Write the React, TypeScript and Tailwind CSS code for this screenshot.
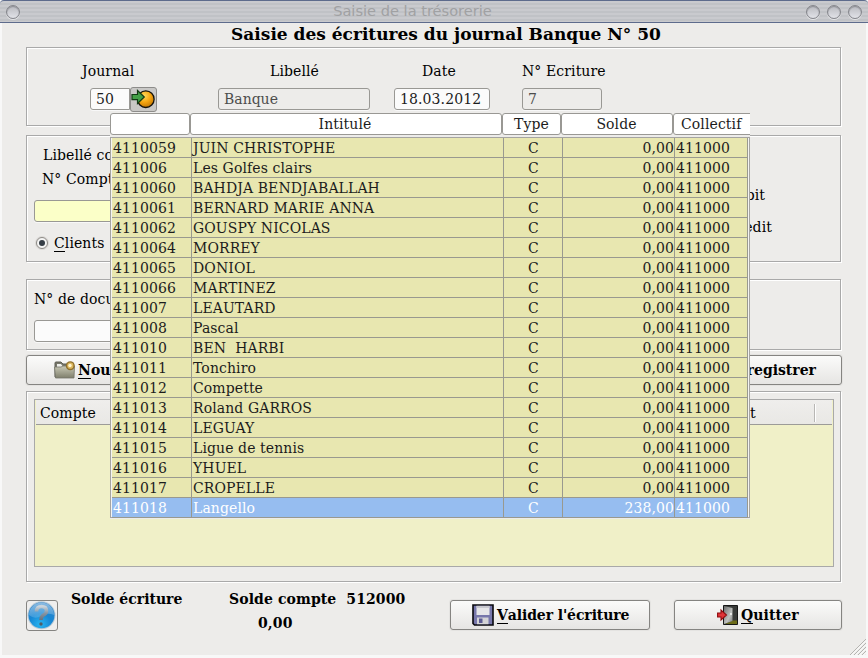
import React from "react";

const rows: [string, string, string][] = [
  ["4110059", "JUIN CHRISTOPHE", "0,00"],
  ["411006", "Les Golfes clairs", "0,00"],
  ["4110060", "BAHDJA BENDJABALLAH", "0,00"],
  ["4110061", "BERNARD MARIE ANNA", "0,00"],
  ["4110062", "GOUSPY NICOLAS", "0,00"],
  ["4110064", "MORREY", "0,00"],
  ["4110065", "DONIOL", "0,00"],
  ["4110066", "MARTINEZ", "0,00"],
  ["411007", "LEAUTARD", "0,00"],
  ["411008", "Pascal", "0,00"],
  ["411010", "BEN  HARBI", "0,00"],
  ["411011", "Tonchiro", "0,00"],
  ["411012", "Compette", "0,00"],
  ["411013", "Roland GARROS", "0,00"],
  ["411014", "LEGUAY", "0,00"],
  ["411015", "Ligue de tennis", "0,00"],
  ["411016", "YHUEL", "0,00"],
  ["411017", "CROPELLE", "0,00"],
  ["411018", "Langello", "238,00"],
];

const group =
  "border border-[#a9a9a9] shadow-[1px_1px_0_#fff,inset_1px_1px_0_#fff]";
const field =
  "h-[22px] border border-[#999894] rounded-[3px] px-[5px] leading-5 shadow-[0_1px_0_#f8f8f8]";
const button =
  "flex items-center h-[30px] border border-[#858481] rounded-[3px] bg-linear-to-b from-[#fbfbfa] to-[#e6e5e3] font-bold text-black shadow-[0_0_0_1px_#e4e3e1]";
const headCell = "shrink-0 border border-[#999894] rounded-[3px] bg-white";

function Knob() {
  return (
    <span className="block size-[14px] rounded-full border border-[#85868c] bg-linear-to-b from-[#b9bac0] to-[#e2e3e8] shadow-[0_1px_0_#e4e5e8,inset_0_1px_1px_#8d8e94]" />
  );
}

function Key({ children }: { children: React.ReactNode }) {
  return <span className="border-b border-black inline-block h-[17px] leading-[17px]">{children}</span>;
}

function GoIcon() {
  return (
    <svg width="25" height="22" viewBox="0 0 25 22">
      <defs>
        <radialGradient id="ball" cx="0.4" cy="0.3" r="0.7">
          <stop offset="0" stopColor="#ffd95e" />
          <stop offset="0.55" stopColor="#f5a50f" />
          <stop offset="1" stopColor="#c67a05" />
        </radialGradient>
      </defs>
      <circle cx="14.8" cy="11.2" r="8.3" fill="url(#ball)" stroke="#15120a" strokeWidth="1.3" />
      <path d="M1 6.500H6.500V2.500L13.300 9L6.500 15.500V11.700H1Z" fill="#43a047" stroke="#123b14" strokeWidth="1.200" />
    </svg>
  );
}

function FolderIcon() {
  return (
    <svg width="22" height="18" viewBox="0 0 22 18">
      <defs>
        <linearGradient id="fold" x1="0" y1="0" x2="0" y2="1">
          <stop offset="0" stopColor="#c9c9b6" />
          <stop offset="1" stopColor="#7f7f6c" />
        </linearGradient>
      </defs>
      <path d="M1 16V2Q1 1 2 1H7L9 3H18V16Z" fill="#77776a" stroke="#5f5f55" />
      <path d="M3 3H7L8.500 5H16V8H3Z" fill="#f1f1ec" />
      <path d="M0.500 6H7L9 5H20.500L20 17H1.500Z" fill="url(#fold)" stroke="#74746a" strokeWidth="0.800" />
      <circle cx="16.300" cy="4.700" r="4.500" fill="#8f6f2c" />
      <circle cx="16.300" cy="4.700" r="3.100" fill="#dcb75c" />
      <circle cx="16" cy="4.500" r="1.700" fill="#fff4cf" />
    </svg>
  );
}

function DiskIcon() {
  return (
    <svg width="22" height="22" viewBox="0 0 22 22">
      <path d="M1 1H21V21H2.500L1 19.500Z" fill="#7777ab" stroke="#08080c" strokeWidth="1.600" />
      <path d="M4.500 1.800H17.500V11H4.500Z" fill="#e6e6e8" />
      <path d="M4.500 2H17.500V4H4.500Z" fill="#c9c9cf" />
      <path d="M5 13.500H16.500V20.200H5Z" fill="#d4d4d6" />
      <path d="M7 14.500H10.500V19H7Z" fill="#5c5c94" />
    </svg>
  );
}

function DoorIcon() {
  return (
    <svg width="22" height="20" viewBox="0 0 22 20">
      <defs>
        <linearGradient id="door" x1="0" y1="0" x2="1" y2="1">
          <stop offset="0" stopColor="#6b6b6b" />
          <stop offset="0.600" stopColor="#c0c2c0" />
          <stop offset="1" stopColor="#7a7a7a" />
        </linearGradient>
      </defs>
      <path d="M6.500 0.500H20.500V19.500H6.500Z" fill="#393b39" stroke="#171717" />
      <path d="M8 19L16 15.500H20V19Z" fill="#6c6b18" />
      <path d="M7 1L15.500 3V16L7 19Z" fill="url(#door)" />
      <circle cx="14" cy="9" r="0.900" fill="#fff" />
      <path d="M0.600 8H4V5L9.500 10L4 15V12H0.600Z" fill="#e03438" stroke="#8e0d10" strokeWidth="1.100" />
    </svg>
  );
}

function HelpIcon() {
  return (
    <svg width="30" height="29" viewBox="0 0 30 29">
      <defs>
        <radialGradient id="help" cx="0.450" cy="0.850" r="0.850">
          <stop offset="0" stopColor="#29b5f0" />
          <stop offset="0.500" stopColor="#1787d4" />
          <stop offset="1" stopColor="#2f83c8" />
        </radialGradient>
        <linearGradient id="shine" x1="0" y1="0" x2="0" y2="1">
          <stop offset="0" stopColor="#fff" stopOpacity="0.450" />
          <stop offset="1" stopColor="#fff" stopOpacity="0.150" />
        </linearGradient>
        <linearGradient id="mark" x1="0" y1="0" x2="0" y2="1">
          <stop offset="0" stopColor="#c9d3db" />
          <stop offset="0.500" stopColor="#8595a4" />
          <stop offset="1" stopColor="#66727e" />
        </linearGradient>
      </defs>
      <circle cx="14.500" cy="14.300" r="14" fill="#b9cad6" />
      <circle cx="14.500" cy="14.300" r="13" fill="url(#help)" />
      <path d="M2 14A12.500 12.500 0 0 1 27 14Q20 11 14 15T2 14Z" fill="url(#shine)" />
      <path d="M9.500 10.500Q9.500 5.500 14.500 5.500T19.500 10Q19.500 12.500 16.500 14Q14 15.500 14 19" fill="none" stroke="url(#mark)" strokeWidth="3.600" />
      <circle cx="14" cy="23" r="1.700" fill="#4f5c68" />
    </svg>
  );
}

export default function App() {
  return (
    <div className="relative w-[868px] h-[658px] overflow-hidden bg-[#f8f8f8] flex flex-col whitespace-pre text-[14px] leading-5 text-black tracking-[0.1px] font-['DejaVu_Serif',serif]">
      <header className="h-[23px] shrink-0 flex items-center border-t border-b border-[#5d6b8c] rounded-t-[4px] px-[6px] bg-[repeating-linear-gradient(to_bottom,#c9cace_0px,#c9cace_2px,#c0c2c6_2px,#c0c2c6_4px)]">
        <Knob />
        <div className="flex-1 pr-px -mt-px text-center text-[#a0a1a3] text-[14.6px] tracking-normal font-['DejaVu_Sans',sans-serif]">
          Saisie de la trésorerie
        </div>
        <div className="flex gap-[7px]">
          <Knob />
          <Knob />
          <Knob />
        </div>
      </header>

      <main className="mx-[2px] h-[632px] shrink-0 bg-[#edecea] pl-6 pr-[25px] flex flex-col">
        <h1 className="h-6 leading-[22px] text-center font-bold text-[17px] tracking-normal pl-[25px]">Saisie des écritures du journal Banque N° 50</h1>

        <section className={`${group} w-[815px] h-[79px] flex pt-[13px]`}>
          <div className="ml-[55px] w-[75px]">
            <div>Journal</div>
            <div className="flex items-center ml-2 mt-[5px] h-[26px]">
              <div className={`${field} w-10 bg-[#fbfbfb] rounded-r-none text-[#1c1c1c]`}>50</div>
              <div className="w-[27px] h-[25px] flex items-center justify-center border border-[#8d8c8a] rounded-[3px] bg-[#c9c8c6]">
                <GoIcon />
              </div>
            </div>
          </div>
          <div className="ml-[61px] w-[152px]">
            <div className="pl-[52px]">Libellé</div>
            <div className={`${field} mt-[7px] text-[#4c4c4c] tracking-normal`}>Banque</div>
          </div>
          <div className="ml-6 w-[96px]">
            <div className="pl-7">Date</div>
            <div className={`${field} mt-[7px] bg-[#fbfbfb] text-[#1c1c1c]`}>18.03.2012</div>
          </div>
          <div className="ml-8 w-[90px]">
            <div>N° Ecriture</div>
            <div className={`${field} mt-[7px] w-20 text-[#4c4c4c]`}>7</div>
          </div>
        </section>

        <section className={`${group} w-[815px] h-[127px] mt-[9px] flex justify-between`}>
          <div className="w-[85px] overflow-hidden pl-[7px] pt-[9px]">
            <div className="pl-[9px]">Libellé co</div>
            <div className="pl-2 mt-1">N° Compt</div>
            <div className={`${field} mt-[11px] w-[150px] bg-[#fbffc8]`} />
            <div className="flex items-center gap-[6px] mt-[11px] pl-[2px] h-5">
              <span className="size-3 shrink-0 rounded-full border border-[#8d8a86] bg-[#f5f5f4] flex items-center justify-center shadow-[0_0_0_1px_#dcdad7]">
                <span className="size-[6px] rounded-full bg-[#363e46]" />
              </span>
              <span>
                <Key>C</Key>lients
              </span>
            </div>
          </div>
          <div className="w-[92px] pt-[49px] flex flex-col gap-3">
            <div className="flex justify-end w-[17px]">bit</div>
            <div className="flex justify-end w-[24px]">edit</div>
          </div>
        </section>

        <section className={`${group} w-[815px] h-[71px] mt-[17px] pl-[7px] pt-[9px]`}>
          <div>N° de docu</div>
          <div className={`${field} mt-[11px] w-[150px] bg-[#fbfbfb]`} />
        </section>

        <div className="flex justify-between w-[816px] mt-[5px]">
          <button className={`${button} w-[190px] pl-[27px] gap-[2px]`}>
            <FolderIcon />
            <span>
              <Key>N</Key>ou
            </span>
          </button>
          <button className={`${button} w-[190px] justify-end pr-[25px] tracking-normal`}>registrer</button>
        </div>

        <section className={`${group} w-[815px] h-[191px] mt-[6px] p-[7px]`}>
          <div className="w-[800px] h-[168px] border border-[#a9a9a9] bg-[#f0f0c8] flex flex-col">
            <div className="h-[25px] border-b border-[#9c9b98] bg-linear-to-b from-[#efeeec] to-[#e9e8e5] flex justify-between pl-[4px] pr-[16px] leading-[27px] mx-px">
              <span>Compte</span>
              <div className="flex pt-1">
                <span className="-mt-1 w-[64px]">t</span>
                <span className="w-[2px] h-[18px] bg-white border-l border-[#b8b7b4]" />
              </div>
            </div>
          </div>
        </section>

        <footer className="flex w-[816px] h-[52px] mt-[6px] pt-px font-bold">
          <button className="mt-[11px] w-8 h-[31px] border border-[#858481] rounded-[3px] bg-[#efeeed] flex items-center justify-center">
            <HelpIcon />
          </button>
          <div className="ml-[13px] w-[158px] tracking-normal">Solde écriture</div>
          <div className="w-[221px]">
            <div>Solde compte  512000</div>
            <div className="mt-1 pl-[29px]">0,00</div>
          </div>
          <button className={`${button} mt-[11px] w-[200px] pl-[21px] gap-[3px] tracking-[-0.1px]`}>
            <DiskIcon />
            <span>
              <Key>V</Key>alider l'écriture
            </span>
          </button>
          <button className={`${button} mt-[11px] ml-6 w-[168px] pl-[42px] gap-[2px]`}>
            <DoorIcon />
            <span>
              <Key>Q</Key>uitter
            </span>
          </button>
        </footer>
      </main>

      <svg className="absolute right-[2px] bottom-[3px]" width="16" height="16" viewBox="0 0 16 16">
        <path d="M0 16L16 0M4 16L16 4M8 16L16 8M12 16L16 12" stroke="#b5b4b1" />
        <path d="M1.500 16L16 1.500M5.500 16L16 5.500M9.500 16L16 9.500M13.500 16L16 13.500" stroke="#fff" />
      </svg>

      <div className="absolute left-[110px] top-[113px] w-[640px] h-[406px] bg-[#edecea] text-[#1c1c1c]">
        <div className="flex h-[22px] w-[640px] overflow-hidden text-center leading-5">
          <div className={`${headCell} w-20`} />
          <div className={`${headCell} w-[312px] pr-[2px]`}>Intitulé</div>
          <div className={`${headCell} w-[59px]`}>Type</div>
          <div className={`${headCell} w-[112px] pr-px`}>Solde</div>
          <div className={`${headCell} w-[80px] text-left pl-[7px]`}>Collectif</div>
        </div>
        <div className="mt-[2px] w-[640px] h-[381px] border border-[#a5a4a1] bg-[#f4f4f2] pl-px pr-[1px]">
          {rows.map(([code, name, amount], i) => {
            const selected = i === rows.length - 1;
            return (
              <div
                key={code}
                className={`flex h-5 w-[636px] border-b border-r border-[#99998f] leading-[20px] ${selected ? "bg-[#96bdf0] text-white" : "bg-[#e8e7b0]"}`}
              >
                <div className="w-20 pl-px border-r border-[#99998f]">{code}</div>
                <div className="w-[312px] pl-px border-r border-[#99998f]">{name}</div>
                <div className="w-[59px] pl-px text-center border-r border-[#99998f]">C</div>
                <div className="w-[112px] text-right border-r border-[#99998f]">{amount}</div>
                <div className="pl-px">411000</div>
              </div>
            );
          })}
        </div>
      </div>
    </div>
  );
}
